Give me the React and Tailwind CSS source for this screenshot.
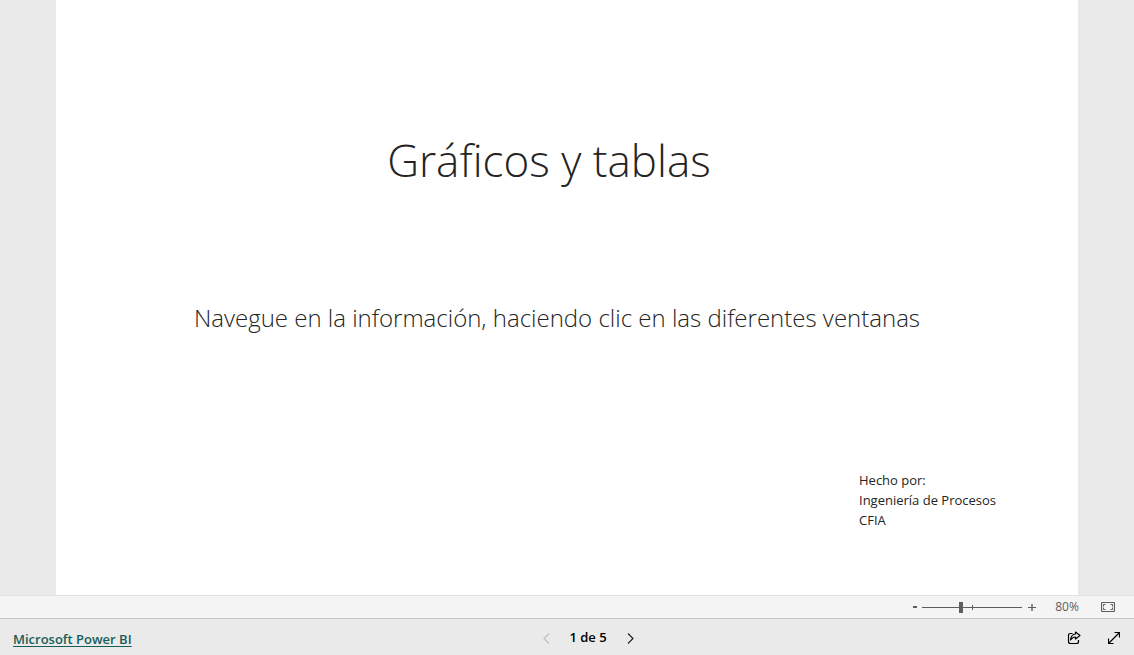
import { useState } from "react";

const PAGES = 5;

function ZoomBar() {
  const [zoom, setZoom] = useState(80);

  return (
    <div className="flex h-6 shrink-0 items-center justify-end border-y border-t-[#e0e0e0] border-b-[#c8c8c8] bg-[#f4f4f4] pr-[10px] text-[#605e5c]">
      <button
        aria-label="Alejar"
        onClick={() => setZoom(Math.max(10, zoom - 10))}
        className="flex h-5 w-[14px] items-center justify-center"
      >
        <svg width="4" height="2" fill="currentColor">
          <rect width="4" height="2" />
        </svg>
      </button>
      {/* Slider with the 100% mark */}
      <div className="relative flex h-5 w-[100px] items-center">
        <input
          type="range"
          aria-label="Zoom"
          min="10"
          max="190"
          value={zoom}
          onChange={(e) => setZoom(Number(e.target.value))}
          className="h-3 w-full appearance-none bg-transparent [&::-webkit-slider-runnable-track]:h-px [&::-webkit-slider-runnable-track]:bg-[#605e5c] [&::-webkit-slider-thumb]:-mt-[5px] [&::-webkit-slider-thumb]:h-[11px] [&::-webkit-slider-thumb]:w-1 [&::-webkit-slider-thumb]:appearance-none [&::-webkit-slider-thumb]:bg-[#605e5c]"
        />
        <span className="pointer-events-none absolute left-1/2 h-[5px] w-px bg-[#605e5c]" />
      </div>
      <button
        aria-label="Acercar"
        onClick={() => setZoom(Math.min(190, zoom + 10))}
        className="flex h-5 w-5 items-center justify-center"
      >
        <svg width="8" height="7" viewBox="0 0 8 7" fill="none" stroke="currentColor">
          <path d="M0 3.5H8" />
          <path d="M4 0V7" strokeWidth="1.4" />
        </svg>
      </button>
      <span className="w-[50px] text-center text-xs">{zoom}%</span>
      <button
        aria-label="Ajustar a la página"
        className="flex h-5 w-8 items-center justify-center"
      >
        <svg width="14" height="10" viewBox="0 0 14 10" fill="none" stroke="currentColor">
          <rect x="0.5" y="0.5" width="13" height="9" rx="1" strokeWidth="1.2" />
          <path d="M4.5 2.5H2.5V4.5M9.5 2.5H11.5V4.5M4.5 7.5H2.5V5.5M9.5 7.5H11.5V5.5" />
        </svg>
      </button>
    </div>
  );
}

function Footer() {
  const [page, setPage] = useState(1);

  return (
    <footer className="grid h-9 shrink-0 grid-cols-[1fr_auto_1fr] items-center pt-px">
      <div className="pl-[13px]">
        <a
          href="https://powerbi.microsoft.com"
          className="text-[13px] font-semibold text-[#185e58] underline underline-offset-2"
        >
          Microsoft Power BI
        </a>
      </div>
      <nav className="flex items-center pt-px pl-[42px] text-[13px]">
        <button
          aria-label="Página anterior"
          disabled={page === 1}
          onClick={() => setPage(page - 1)}
          className="flex h-7 w-5 items-center justify-center text-black disabled:text-[#c0c0c0]"
        >
          <svg width="7" height="11" viewBox="0 0 7 11" fill="none" stroke="currentColor" strokeWidth="1.2">
            <path d="M6 0.5L1 5.5L6 10.5" />
          </svg>
        </button>
        <span className="w-16 text-center font-semibold text-black">
          {page} de {PAGES}
        </span>
        <button
          aria-label="Página siguiente"
          disabled={page === PAGES}
          onClick={() => setPage(page + 1)}
          className="flex h-7 w-5 items-center justify-center text-[#252423] disabled:text-[#c0c0c0]"
        >
          <svg width="7" height="11" viewBox="0 0 7 11" fill="none" stroke="currentColor" strokeWidth="1.2">
            <path d="M1 0.5L6 5.5L1 10.5" />
          </svg>
        </button>
      </nav>
      <div className="flex justify-end gap-3 pr-[6px] text-black">
        <button aria-label="Compartir" className="flex h-7 w-7 items-center justify-center">
          <svg width="14" height="14" viewBox="0 0 14 14" fill="none" stroke="currentColor" strokeWidth="1.2">
            <path d="M5.5 2.5H3.5Q1.5 2.5 1.5 4.5V10.5Q1.5 12.5 3.5 12.5H9.5Q11.5 12.5 11.5 10.5V9" />
            <path d="M8.5 1L13 4.5L8.5 8V6Q5.5 6 3.5 9Q4 3.5 8.5 3Z" strokeLinejoin="round" />
          </svg>
        </button>
        <button aria-label="Pantalla completa" className="flex h-7 w-7 items-center justify-center">
          <svg width="12" height="12" viewBox="0 0 12 12" fill="none" stroke="currentColor" strokeWidth="1.2">
            <path d="M0.5 11.5L11.5 0.5M6.5 0.5H11.5V5.5M0.5 6.5V11.5H5.5" />
          </svg>
        </button>
      </div>
    </footer>
  );
}

export default function App() {
  return (
    <div className="flex min-h-screen flex-col bg-[#eaeaea] font-['Open_Sans','Noto_Sans',sans-serif]">
      <main className="mx-14 flex grow flex-col bg-white text-[#252423]">
        <h1 className="pt-32 pr-9 text-center text-[44px] leading-[64px] font-light">
          Gráficos y tablas
        </h1>
        <p className="pt-[108px] pr-5 text-center text-2xl leading-9 font-light">
          Navegue en la información, haciendo clic en las diferentes ventanas
        </p>
        <p className="w-[219px] self-end pt-[134px] text-[13px] leading-5">
          Hecho por:
          <br />
          Ingeniería de Procesos
          <br />
          CFIA
        </p>
      </main>
      <ZoomBar />
      <Footer />
    </div>
  );
}
